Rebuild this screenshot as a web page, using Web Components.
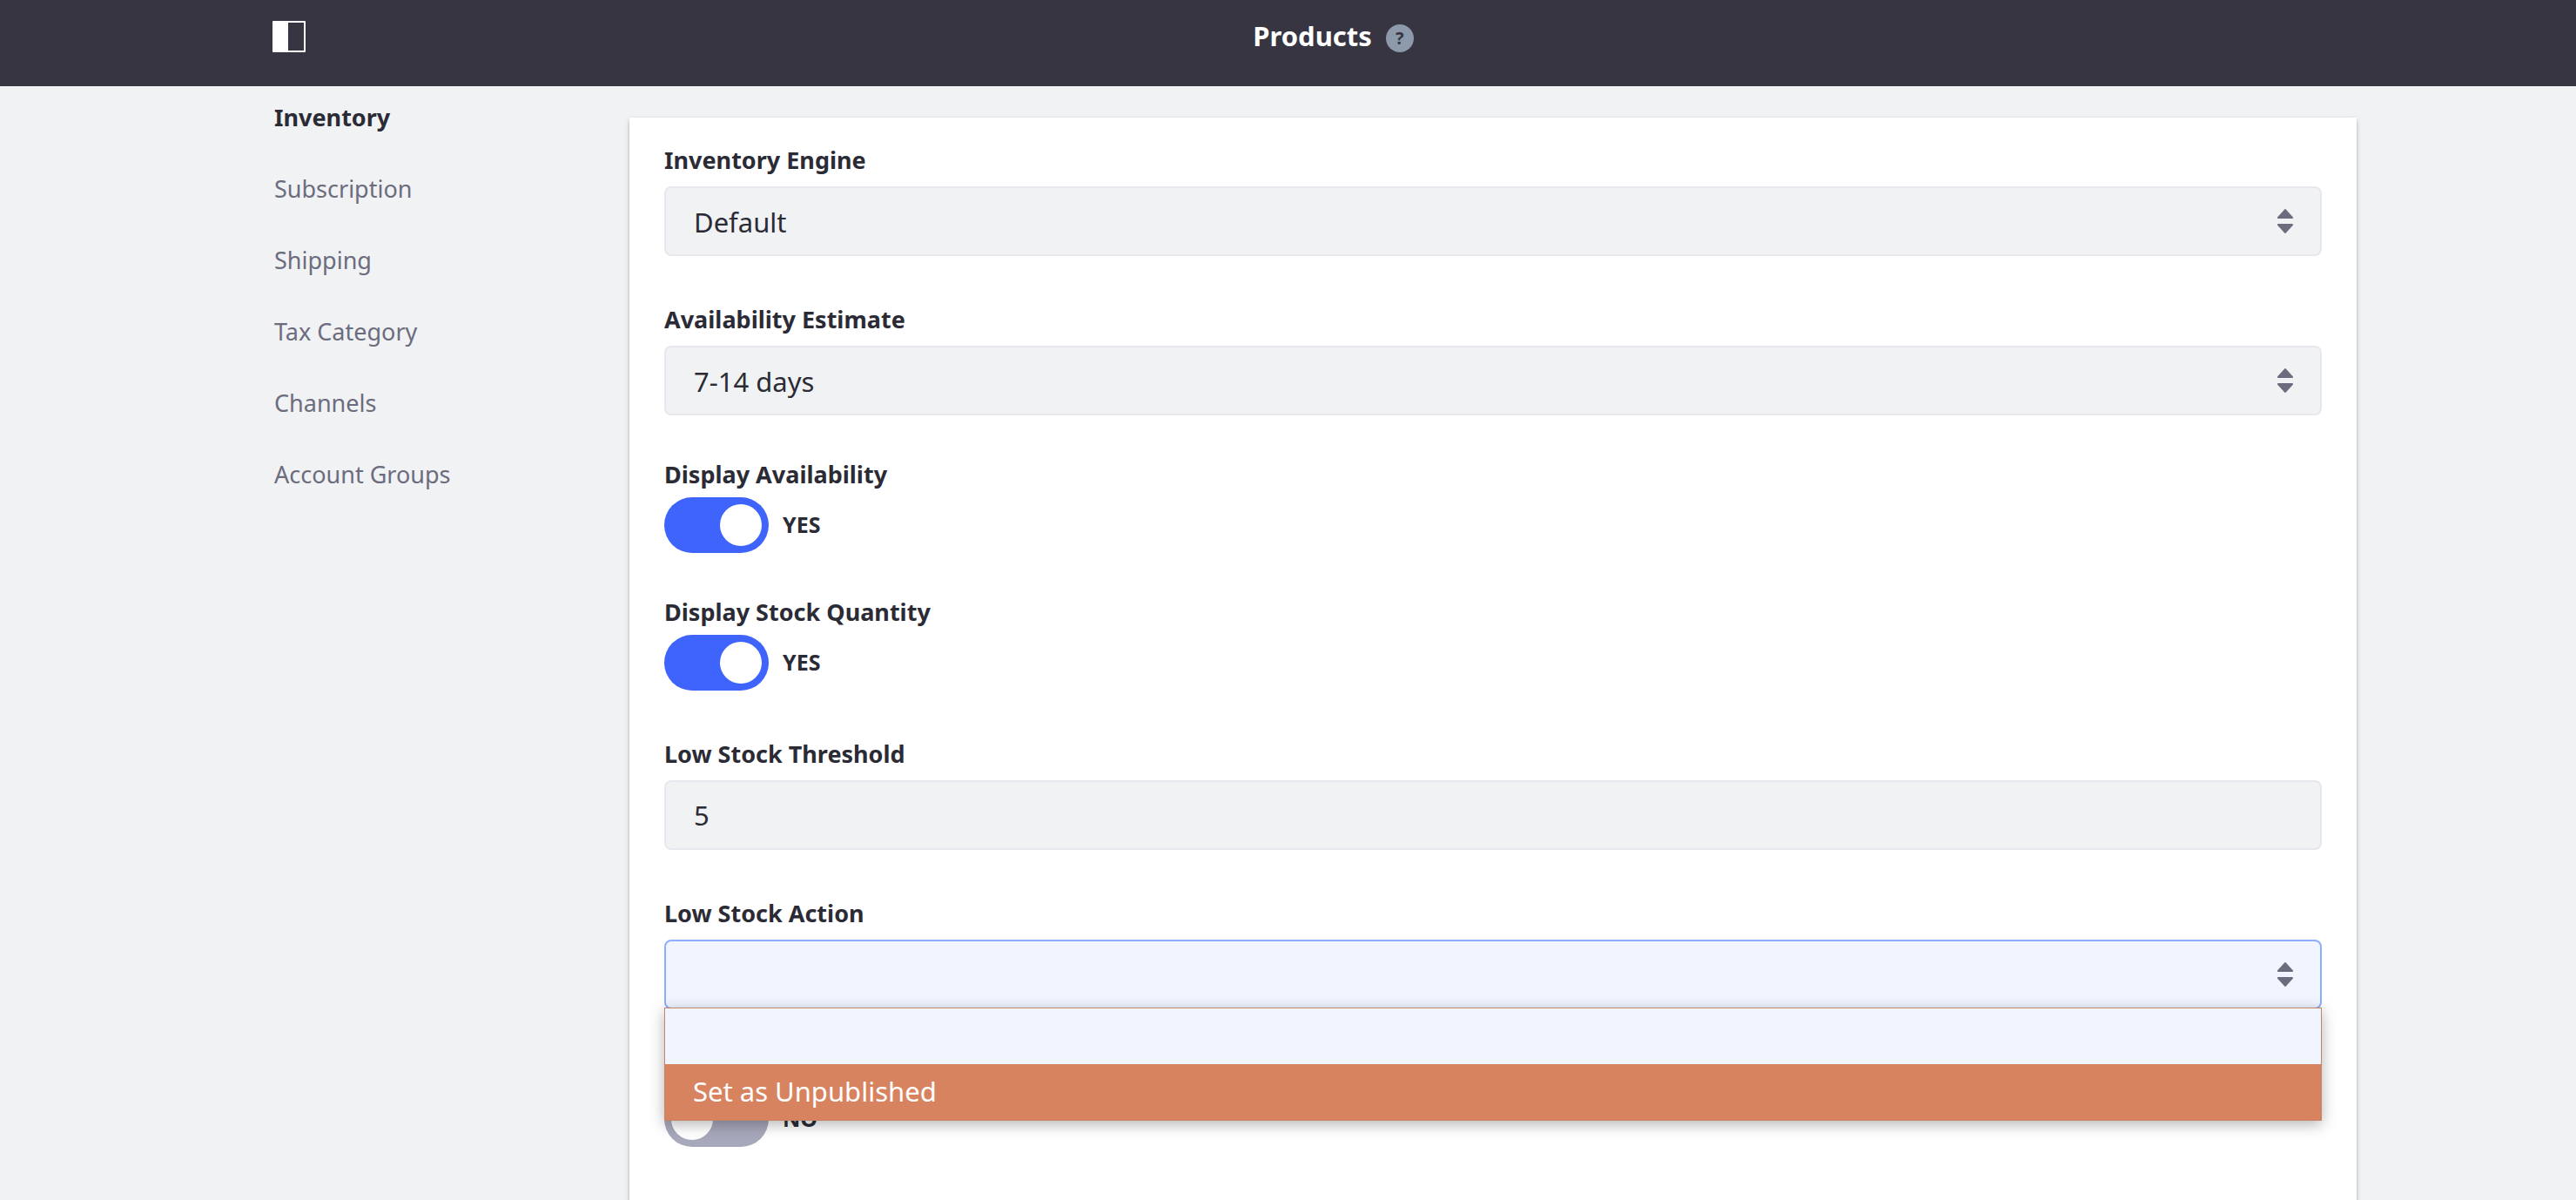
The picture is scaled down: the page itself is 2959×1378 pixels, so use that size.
<!DOCTYPE html>
<html lang="en">
<head>
<meta charset="utf-8">
<title>Products</title>
<style>
  html { height: 100%; }
  body {
    margin: 0;
    min-height: 100%;
    background: #f1f2f4;
    color: #2b2b36;
    font-family: "Noto Sans", "Open Sans", sans-serif;
    overflow: hidden;
  }
</style>
</head>
<body>
<product-settings></product-settings>
<script>
const define = (name, html, setup) => {
  const template = document.createElement('template');
  template.innerHTML = html;
  customElements.define(name, class extends HTMLElement {
    constructor() {
      super();
      this.attachShadow({ mode: 'open' }).append(template.content.cloneNode(true));
    }
    connectedCallback() { if (setup) setup(this, this.shadowRoot); }
  });
};

const labelStyle = `
  .label { font-size: 27px; line-height: 36px; font-weight: 700; }
`;

const boxStyle = `
  .box {
    grid-area: 1 / 1;
    box-sizing: border-box;
    width: 100%;
    height: 80px;
    margin: 0;
    padding: 0 32px;
    border: 2px solid #e7e7ed;
    border-radius: 8px;
    background: #f1f2f4;
    color: inherit;
    font: 400 31px/44px "Noto Sans", "Open Sans", sans-serif;
    appearance: none;
    outline: none;
  }
`;

define('control-bar', `
  <style>
    :host { display: block; background: #363541; color: #fff; }
    header {
      display: grid;
      grid-template-columns: 1fr auto 1fr;
      align-items: start;
      box-sizing: border-box;
      height: 99px;
      max-width: 2456px;
      margin: 0 auto;
      padding: 20px 61px;
    }
    button { display: block; padding: 0; border: 0; background: none; color: inherit; }
    .panel { padding: 4px 0; }
    svg { display: block; }
    .title { display: flex; align-items: center; gap: 16px; padding-left: 104px; }
    h1 { margin: 0; font-size: 31px; line-height: 42px; font-weight: 700; }
    .help {
      width: 32px;
      height: 32px;
      border-radius: 50%;
      background: #8c9aab;
      color: #363541;
      margin-top: 6px;
      font: 700 20px/32px "Noto Sans", "Open Sans", sans-serif;
    }
  </style>
  <header>
    <button class="panel" type="button" aria-label="Toggle product menu">
      <svg width="38" height="36" viewBox="0 0 38 36" fill="#fff">
        <path fill-rule="evenodd" d="M1 0h36a1 1 0 0 1 1 1v34a1 1 0 0 1-1 1H1a1 1 0 0 1-1-1V1a1 1 0 0 1 1-1zM18 2v32h18V2z"/>
      </svg>
    </button>
    <div class="title">
      <h1><slot></slot></h1>
      <button class="help" type="button" aria-label="Help">?</button>
    </div>
  </header>
`);

define('side-link', `
  <style>
    :host { display: block; }
    a { color: #6b6c7e; text-decoration: none; font-size: 27px; line-height: 36px; display: block; }
    :host([active]) a { color: #2b2b36; font-weight: 700; }
  </style>
  <a href="#"><slot></slot></a>
`, (host, root) => {
  if (host.hasAttribute('active')) root.querySelector('a').setAttribute('aria-current', 'page');
});

define('side-nav', `
  <style>
    :host { display: block; }
    nav { display: flex; flex-direction: column; gap: 46px; padding: 18px 24px 0 63px; }
  </style>
  <nav aria-label="Product sections"><slot></slot></nav>
`);

define('select-field', `
  <style>
    :host { display: block; padding-top: 5px; }
    ${labelStyle}
    ${boxStyle}
    .label { display: block; margin-bottom: 12px; }
    .control { display: grid; position: relative; }
    select.box { padding-top: 2px; }
    svg { grid-area: 1 / 1; justify-self: end; align-self: center; margin-right: 33px; pointer-events: none; }
    :host([open]) .box { background: #f0f5ff; border-color: #8fadff; }
    ul {
      position: absolute;
      top: calc(100% - 2px);
      left: 0;
      right: 0;
      z-index: 2;
      margin: 0;
      padding: 0;
      list-style: none;
      border: 1px solid #c58468;
      background: #f0f5ff;
      box-shadow: 0 4px 16px rgba(0, 0, 0, .3);
    }
    li { box-sizing: border-box; height: 64px; padding: 0 32px; font-size: 31px; line-height: 62px; }
    li[aria-selected="true"] { background: #d8835f; color: #fff; }
  </style>
  <label class="label" for="control"></label>
  <div class="control">
    <select class="box" id="control"></select>
    <svg width="18" height="28" viewBox="0 0 18 28" fill="#6b6c7e">
      <path d="M8.2.4a1.1 1.1 0 0 1 1.6 0L17.8 9.2c.4.7.1 1.8-.8 1.8H1c-.9 0-1.2-1.1-.8-1.8z"/>
      <path d="M8.2 27.6a1.1 1.1 0 0 0 1.6 0L17.8 18.8c.4-.7.1-1.8-.8-1.8H1c-.9 0-1.2 1.1-.8 1.8z"/>
    </svg>
  </div>
`, (host, root) => {
  root.querySelector('label').textContent = host.getAttribute('label');
  const select = root.querySelector('select');
  select.add(new Option(host.getAttribute('value') || ''));
  if (host.hasAttribute('open')) {
    const list = document.createElement('ul');
    list.setAttribute('role', 'listbox');
    for (const text of ['', host.getAttribute('option')]) {
      const item = document.createElement('li');
      item.setAttribute('role', 'option');
      item.setAttribute('aria-selected', String(text !== ''));
      item.textContent = text;
      list.append(item);
    }
    root.querySelector('.control').append(list);
  }
});

define('text-field', `
  <style>
    :host { display: block; padding-top: 5px; }
    ${labelStyle}
    ${boxStyle}
    .label { display: block; margin-bottom: 12px; }
    .control { display: grid; }
  </style>
  <label class="label" for="control"></label>
  <div class="control"><input class="box" id="control" type="text"></div>
`, (host, root) => {
  root.querySelector('label').textContent = host.getAttribute('label');
  root.querySelector('input').value = host.getAttribute('value');
});

define('toggle-field', `
  <style>
    :host { display: block; }
    ${labelStyle}
    .label { display: block; min-height: 36px; margin-bottom: 8px; }
    .row { display: flex; align-items: center; gap: 16px; }
    input {
      appearance: none;
      display: flex;
      align-items: center;
      box-sizing: border-box;
      width: 120px;
      height: 64px;
      margin: 0;
      padding: 8px;
      border-radius: 32px;
      background: #a7a8bb;
    }
    input::before { content: ""; width: 48px; height: 48px; border-radius: 50%; background: #fff; }
    input:checked { background: #3f64fb; justify-content: flex-end; }
    .state { padding-bottom: 2px; font-size: 25px; line-height: 36px; font-weight: 700; }
  </style>
  <label class="label" for="control"></label>
  <div class="row">
    <input id="control" type="checkbox" role="switch">
    <span class="state"></span>
  </div>
`, (host, root) => {
  const input = root.querySelector('input');
  const state = root.querySelector('.state');
  const sync = () => { state.textContent = input.checked ? 'YES' : 'NO'; };
  root.querySelector('label').textContent = host.getAttribute('label') || '';
  input.checked = host.hasAttribute('checked');
  input.addEventListener('change', sync);
  sync();
});

define('form-sheet', `
  <style>
    :host {
      display: flex;
      flex-direction: column;
      gap: 50px;
      box-sizing: border-box;
      min-height: calc(100vh - 135px);
      margin-top: 36px;
      padding: 26px 40px 70px;
      background: #fff;
      box-shadow: 0 2px 6px -2px rgba(0, 0, 0, .6);
    }
  </style>
  <slot></slot>
`);

define('product-settings', `
  <style>
    :host { display: block; }
    main {
      display: grid;
      grid-template-columns: 471px 1fr;
      max-width: 2455px;
      margin: 0 auto;
    }
  </style>
  <control-bar>Products</control-bar>
  <main>
    <side-nav>
      <side-link active>Inventory</side-link>
      <side-link>Subscription</side-link>
      <side-link>Shipping</side-link>
      <side-link>Tax Category</side-link>
      <side-link>Channels</side-link>
      <side-link>Account Groups</side-link>
    </side-nav>
    <form-sheet>
      <select-field label="Inventory Engine" value="Default"></select-field>
      <select-field label="Availability Estimate" value="7-14 days"></select-field>
      <toggle-field label="Display Availability" checked></toggle-field>
      <toggle-field label="Display Stock Quantity" checked></toggle-field>
      <text-field label="Low Stock Threshold" value="5"></text-field>
      <select-field label="Low Stock Action" option="Set as Unpublished" open></select-field>
      <toggle-field></toggle-field>
    </form-sheet>
  </main>
`);
</script>
</body>
</html>
